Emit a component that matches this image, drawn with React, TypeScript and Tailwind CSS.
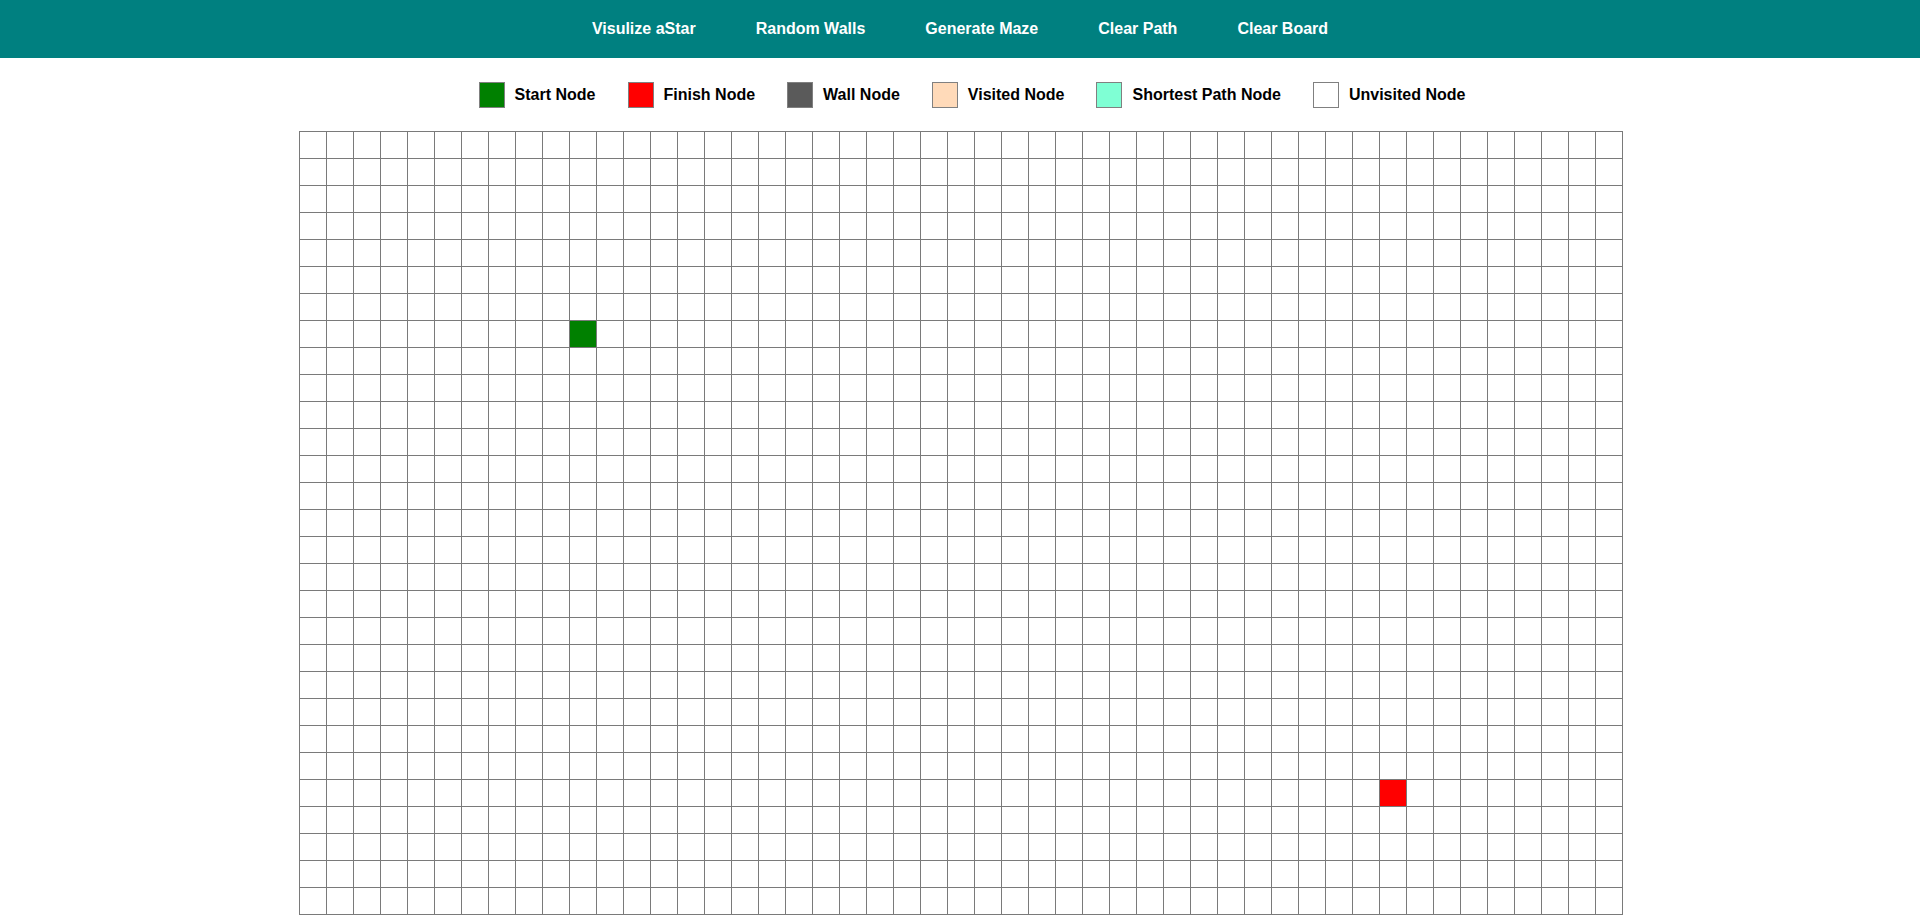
import React from "react";

const ROWS = 29;
const COLS = 49;
const START = { r: 7, c: 10 };
const FINISH = { r: 24, c: 40 };

const navItems = ["Visulize aStar", "Random Walls", "Generate Maze", "Clear Path", "Clear Board"];

const legend: { label: string; cls: string }[] = [
  { label: "Start Node", cls: "bg-[#008000]" },
  { label: "Finish Node", cls: "bg-[#ff0000]" },
  { label: "Wall Node", cls: "bg-[#5a5a5a]" },
  { label: "Visited Node", cls: "bg-[#ffdab9]" },
  { label: "Shortest Path Node", cls: "bg-[#7fffd4]" },
  { label: "Unvisited Node", cls: "bg-white" },
];

export default function App() {
  const cells: React.ReactNode[] = [];
  for (let r = 0; r < ROWS; r++) {
    for (let c = 0; c < COLS; c++) {
      let bg = "bg-white";
      if (r === START.r && c === START.c) bg = "bg-[#008000]";
      else if (r === FINISH.r && c === FINISH.c) bg = "bg-[#ff0000]";
      cells.push(
        <div
          key={`${r}-${c}`}
          className={`w-[27px] h-[27px] border-r border-b border-[#7a7a7a] ${bg}`}
        />
      );
    }
  }

  return (
    <div className="min-h-[921px] bg-white font-['Liberation_Sans',Arial,sans-serif]">
      <nav className="h-[58px] bg-[#008080] flex items-center justify-center gap-[60px]">
        {navItems.map((t) => (
          <span key={t} className="text-white font-bold text-[16px] leading-none">
            {t}
          </span>
        ))}
      </nav>

      <div className="mt-[24px] flex items-center justify-center gap-[32px] pl-[24px]">
        {legend.map((l) => (
          <div key={l.label} className="flex items-center gap-[10px]">
            <div className={`w-[26px] h-[26px] border border-[#808080] ${l.cls}`} />
            <span className="text-black font-bold text-[16px] leading-none">{l.label}</span>
          </div>
        ))}
      </div>

      <div className="mt-[23px] flex justify-center pl-[2px]">
        <div className="grid grid-cols-[repeat(49,27px)] border-l border-t border-[#7a7a7a]">
          {cells}
        </div>
      </div>
    </div>
  );
}
